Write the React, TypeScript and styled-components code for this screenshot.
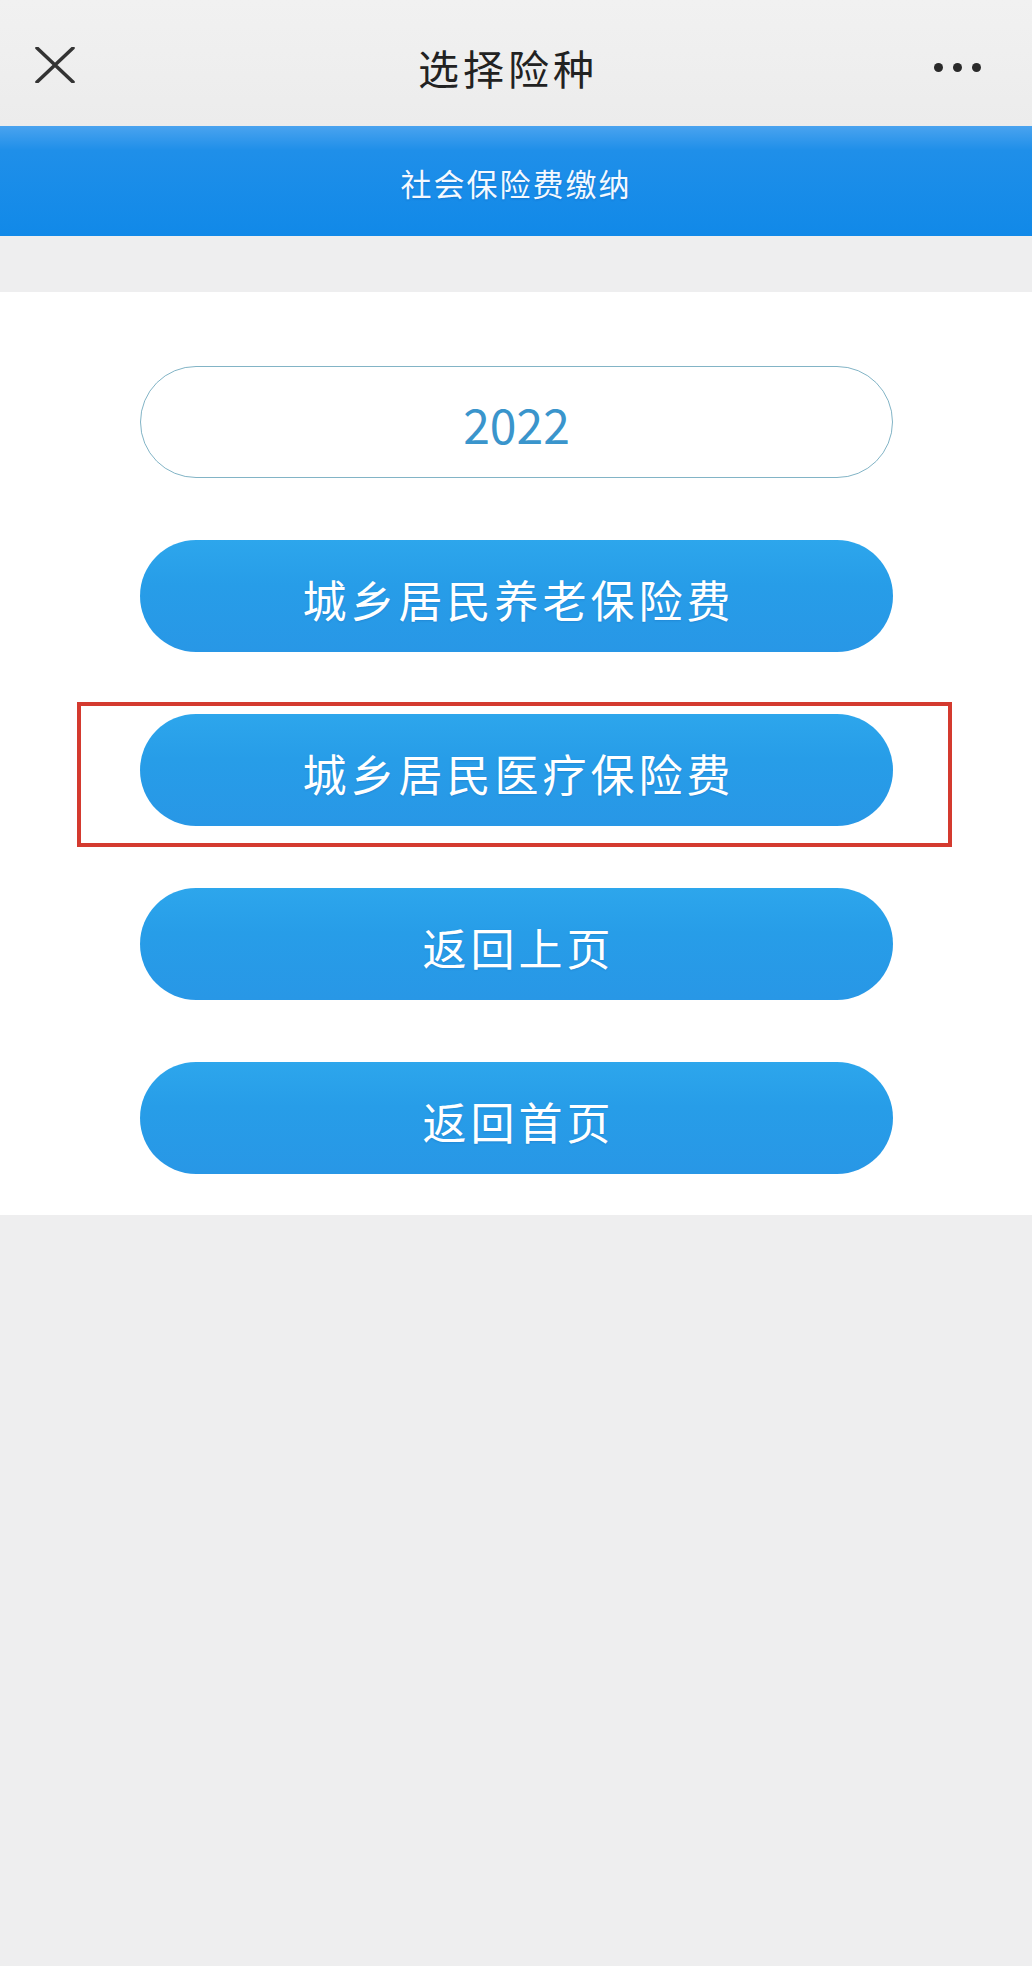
import styled, { createGlobalStyle } from 'styled-components'

const GlobalStyle = createGlobalStyle`
  html, body {
    margin: 0;
    padding: 0;
    background: #eeeeef;
  }
  body {
    font-family: "Noto Sans CJK SC", "Noto Sans", sans-serif;
  }
  * {
    box-sizing: border-box;
  }
`

const Page = styled.div`
  min-height: 1966px;
  background: #eeeeef;
  display: flex;
  flex-direction: column;
`

const NavBar = styled.header`
  height: 126px;
  display: grid;
  grid-template-columns: 1fr auto 1fr;
  align-items: center;
  padding: 0 51px 0 35px;
  background: linear-gradient(180deg, #f1f1f1 0%, #ececec 100%);
`

const CloseButton = styled.button`
  justify-self: start;
  width: 40px;
  height: 36px;
  padding: 0;
  border: none;
  background: transparent;
  color: #333;
  display: flex;
  align-items: center;
  justify-content: center;
  cursor: pointer;
  margin-top: 4px;
`

const Title = styled.h1`
  margin: 0;
  padding-top: 8px;
  font-size: 41px;
  font-weight: 400;
  letter-spacing: 4px;
  color: #222;
  text-align: center;
`

const MoreButton = styled.button`
  justify-self: end;
  display: flex;
  gap: 10px;
  padding: 0;
  border: none;
  background: transparent;
  cursor: pointer;
  margin-top: 8px;
`

const Dot = styled.span`
  width: 9px;
  height: 9px;
  border-radius: 50%;
  background: #2a2a2a;
`

const Banner = styled.div`
  height: 110px;
  display: flex;
  align-items: center;
  justify-content: center;
  background: linear-gradient(180deg, #4aa3ef 0%, #1f8fe9 22%, #1189e8 100%);
  color: #f4f9ff;
  font-size: 31px;
  letter-spacing: 2px;
  padding-top: 2px;
  margin-bottom: 56px;
  text-shadow: 0 1px 2px rgba(0, 60, 140, 0.25);
`

const Card = styled.main`
  background: #ffffff;
  padding: 74px 139px 41px 140px;
  display: flex;
  flex-direction: column;
  gap: 62px;
`

const PillBase = styled.button`
  width: 100%;
  height: 112px;
  border-radius: 56px;
  display: flex;
  align-items: center;
  justify-content: center;
  font-family: "Noto Sans CJK SC", "Noto Sans", sans-serif;
  cursor: pointer;
  padding: 6px 0 0;
`

const YearPill = styled(PillBase)`
  background: #ffffff;
  border: 1.5px solid #82b4c6;
  color: #3a95cc;
  font-size: 48px;
  padding-top: 2px;
`

const ActionButton = styled(PillBase)`
  border: none;
  background: linear-gradient(180deg, #2da6ec 0%, #279de8 40%, #2897e6 100%);
  color: #ffffff;
  font-size: 44px;
  letter-spacing: 4px;
  text-indent: 4px;
  text-shadow: 0 1px 2px rgba(0, 70, 150, 0.2);
`

const Highlight = styled.div`
  position: relative;

  &::after {
    content: '';
    position: absolute;
    top: -12px;
    left: -63px;
    right: -59px;
    bottom: -21px;
    border: 4px solid #d43a2f;
    pointer-events: none;
  }
`

const actions = [
  { label: '城乡居民养老保险费', marked: false },
  { label: '城乡居民医疗保险费', marked: true },
  { label: '返回上页', marked: false },
  { label: '返回首页', marked: false },
]

export default function App() {
  return (
    <>
      <GlobalStyle />
      <Page>
        <NavBar>
          <CloseButton aria-label="关闭">
            <svg width="40" height="36" viewBox="0 0 40 36" fill="none" stroke="currentColor">
              <path d="M2 1L38 35M38 1L2 35" strokeWidth={3.5} strokeLinecap="round" />
            </svg>
          </CloseButton>
          <Title>选择险种</Title>
          <MoreButton aria-label="更多">
            <Dot />
            <Dot />
            <Dot />
          </MoreButton>
        </NavBar>

        <Banner>社会保险费缴纳</Banner>

        <Card>
          <YearPill>2022</YearPill>
          {actions.map(item =>
            item.marked ? (
              <Highlight key={item.label}>
                <ActionButton>{item.label}</ActionButton>
              </Highlight>
            ) : (
              <ActionButton key={item.label}>{item.label}</ActionButton>
            )
          )}
        </Card>
      </Page>
    </>
  )
}
